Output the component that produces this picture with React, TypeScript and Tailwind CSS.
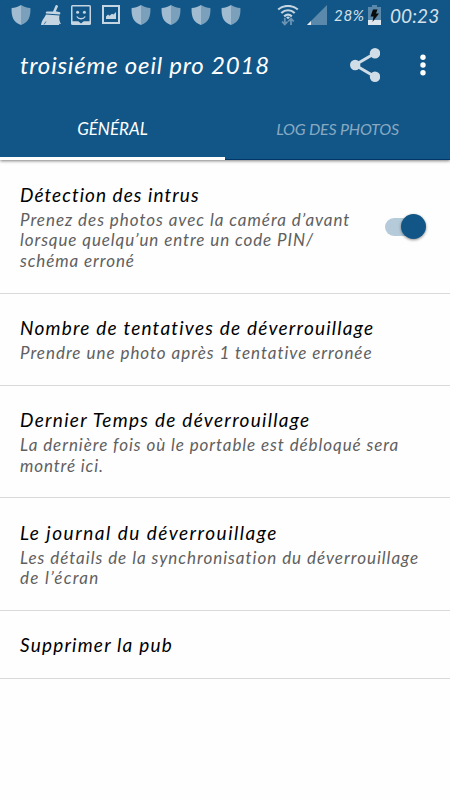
import React from 'react'
import { clsx } from 'clsx'

interface Line {
  text: string
  tracking: string
}

interface Preference {
  title: Line
  summary: Line[]
  height: string
  checked?: boolean
}

const PREFERENCES: Preference[] = [
  {
    title: { text: 'Détection des intrus', tracking: 'tracking-[1.05px]' },
    summary: [
      { text: 'Prenez des photos avec la caméra d’avant', tracking: 'tracking-[0.96px]' },
      { text: 'lorsque quelqu’un entre un code PIN/', tracking: 'tracking-[0.91px]' },
      { text: 'schéma erroné', tracking: 'tracking-[0.9px]' },
    ],
    height: 'h-[134px]',
    checked: true,
  },
  {
    title: { text: 'Nombre de tentatives de déverrouillage', tracking: 'tracking-[1.22px]' },
    summary: [{ text: 'Prendre une photo après 1 tentative erronée', tracking: 'tracking-[0.97px]' }],
    height: 'h-[92px]',
  },
  {
    title: { text: 'Dernier Temps de déverrouillage', tracking: 'tracking-[1.28px]' },
    summary: [
      { text: 'La dernière fois où le portable est débloqué sera', tracking: 'tracking-[0.92px]' },
      { text: 'montré ici.', tracking: 'tracking-[0.87px]' },
    ],
    height: 'h-[112px]',
  },
  {
    title: { text: 'Le journal du déverrouillage', tracking: 'tracking-[1.5px]' },
    summary: [
      { text: 'Les détails de la synchronisation du déverrouillage', tracking: 'tracking-[0.97px]' },
      { text: 'de l’écran', tracking: 'tracking-[1.3px]' },
    ],
    height: 'h-[113px]',
  },
  {
    title: { text: 'Supprimer la pub', tracking: 'tracking-[1.2px]' },
    summary: [],
    height: 'h-[68px]',
  },
]

function ShieldIcon() {
  return (
    <svg className="w-5 h-5 shrink-0" viewBox="0 0 20 20">
      <path d="M10 0C8 1.6 4 2.8.6 3C.3 11 1.800 17 10 20Z" fill="#a1bbd0" />
      <path d="M10 0c2 1.600 6 2.800 9.400 3C19.700 11 18.200 17 10 20Z" fill="#7ba0bc" />
    </svg>
  )
}

function BroomIcon() {
  return (
    <svg className="w-5 h-5 shrink-0" viewBox="0 0 20 20" fill="#c5d5e2">
      <path d="M14.700.2q1.800-.4 2.300 1.200l-2.200 4.800 4.200 1q.8 1.400-.2 2.300L5 8.600q-.6-1.500.7-2.200l6.300.2Z" />
      <path d="M5 9.600l13.500 1c-.8 3 .1 6.400 1.500 8.400l-2-.3.2 1.300H0c.4-4 2.700-6 5-10.400Z" />
      <path d="M3 19.500 5 16.500" stroke="#125687" strokeWidth=".7" />
    </svg>
  )
}

function FaceIcon() {
  return (
    <svg className="w-5 h-5 shrink-0" viewBox="0 0 20 20">
      <path d="M1.500 0h17Q20 0 20 1.500v17q0 1.500-1.500 1.500h-17Q0 20 0 18.500v-17Q0 0 1.500 0Z" fill="#c5d5e2" />
      <path d="M1.500 1.500h17v14.800h-5.800L10 18.500l-2.700-2.200H1.500Z" fill="#125687" />
      <circle cx="6.600" cy="7.300" r="1.500" fill="#c5d5e2" />
      <circle cx="13.400" cy="7.300" r="1.500" fill="#c5d5e2" />
      <path d="M5.800 11.500c1.800 3 6.600 3 8.400 0" fill="none" stroke="#c5d5e2" strokeWidth="1.400" />
    </svg>
  )
}

function PictureIcon() {
  return (
    <svg className="w-[18px] h-5 shrink-0" viewBox="0 0 18 20">
      <path d="M1 1h16v17H1Z" fill="none" stroke="#c5d5e2" strokeWidth="2" />
      <path d="M4 14v-2.500l2-2 1.500 1.200 2.500-2 1.500.8L14 7v7Z" fill="#c5d5e2" />
    </svg>
  )
}

function WifiIcon() {
  return (
    <svg className="w-[22px] h-[22px] shrink-0" viewBox="0 0 22 22" fill="none">
      <path d="M1.200 4.500c5.500-4.700 14-4.700 19.600 0M4.300 8c4-3.700 9.400-3.700 13.400 0M7.200 11.300c2.400-2.100 5.200-2.100 7.600 0" stroke="#c5d5e2" strokeWidth="2.200" />
      <path d="m11 14.300-2-2c1.300-1 2.700-1 4 0Z" fill="#c5d5e2" />
      <path d="M7.800 13v6M5 16.500l2.800 3 2.800-3M14 20v-6M11.200 16.500l2.800-3 2.800 3" stroke="#6b94b4" strokeWidth="1.800" />
    </svg>
  )
}

function SignalIcon() {
  return (
    <svg className="w-5 h-5 shrink-0" viewBox="0 0 20 20">
      <path d="M20 0v20H0Z" fill="#5b89ab" />
      <path d="M4 16v4H0Z" fill="#e4ebf1" />
    </svg>
  )
}

function BatteryIcon() {
  return (
    <svg className="w-[13px] h-5 shrink-0" viewBox="0 0 13 20">
      <path d="M4 0h5v2h4v18H0V2h4Z" fill="#5b89ab" />
      <path d="M0 15h13v5H0Z" fill="#dfe7ee" />
      <path d="M5 4.500h4.500L8 8.500h3L4.500 17l1-5.500H2.500Z" fill="#0b0b0b" />
    </svg>
  )
}

function StatusBar() {
  return (
    <div className="h-[31px] flex items-start pt-[5px] pl-[11px] pr-[10px] text-[#d5e0e9]">
      <div className="flex gap-2.5">
        <ShieldIcon />
        <BroomIcon />
        <FaceIcon />
        <div className="w-5 flex justify-center">
          <PictureIcon />
        </div>
        <ShieldIcon />
        <ShieldIcon />
        <ShieldIcon />
        <ShieldIcon />
      </div>
      <div className="ml-auto flex items-start">
        <WifiIcon />
        <div className="ml-2">
          <SignalIcon />
        </div>
        <span className="w-[34px] text-[15px] leading-5 ml-[7px] tracking-[0.7px] whitespace-nowrap">28%</span>
        <BatteryIcon />
        <span className="w-[50px] ml-[9px] text-[19px] leading-[21px] tracking-[0.1px] whitespace-nowrap">00:23</span>
      </div>
    </div>
  )
}

function AppBar() {
  return (
    <div className="h-[69px] flex items-center pb-px pl-5 pr-[24.5px] text-white">
      <h1 className="text-[24px] leading-8 tracking-[0.8px] whitespace-nowrap">troisiéme oeil pro 2018</h1>
      <svg className="ml-auto w-[30px] h-[34px]" viewBox="0 0 30 34" fill="#d0dde7">
        <path d="M25 5.200 5 17l20 11.700" fill="none" stroke="#d0dde7" strokeWidth="3" />
        <circle cx="25" cy="5.200" r="5.200" />
        <circle cx="5.200" cy="17" r="5.200" />
        <circle cx="25" cy="28.700" r="5.200" />
      </svg>
      <svg className="ml-[39.5px] w-[6px] h-[22px]" viewBox="0 0 6 22" fill="white">
        <circle cx="3" cy="3.300" r="2.700" />
        <circle cx="3" cy="11" r="2.700" />
        <circle cx="3" cy="18.700" r="2.700" />
      </svg>
    </div>
  )
}

function Tabs() {
  return (
    <div className="h-[60px] grid grid-cols-2 leading-6 whitespace-nowrap text-center">
      <div className="border-b-[3px] border-white pt-[17px] text-[17px] text-white">GÉNÉRAL</div>
      <div className="border-b border-[#003567] pt-[17px] text-[16px] tracking-[-0.2px] text-[#87a9c2]">
        LOG DES PHOTOS
      </div>
    </div>
  )
}

function Switch() {
  return (
    <div className="relative w-[41px] h-[26px] shrink-0 flex items-center">
      <div className="w-[34px] h-[18px] rounded-full bg-[#b6cbda]" />
      <div className="absolute right-0 top-0 w-[25px] h-[25px] rounded-full bg-[#125687] shadow-[0_1px_3px_rgba(0,0,0,0.45)]" />
    </div>
  )
}

function PreferenceRow({ title, summary, height, checked }: Preference) {
  return (
    <div className={clsx('flex items-center border-b border-[#d9d9d9] pl-5 pr-6', height)}>
      <div className="flex-1 min-w-0 whitespace-nowrap">
        <h2 className={clsx('text-[19px] leading-[26px] text-black', title.tracking)}>{title.text}</h2>
        {summary.length > 0 && (
          <div className="mt-0.5 text-[17px] leading-[20.5px] text-[#606060]">
            {summary.map((line) => (
              <p key={line.text} className={line.tracking}>
                {line.text}
              </p>
            ))}
          </div>
        )}
      </div>
      {checked && <Switch />}
    </div>
  )
}

export default function App() {
  return (
    <div className="w-[450px] h-[800px] overflow-hidden bg-[#fefefe] italic font-['Lato','Open_Sans',sans-serif]">
      <header className="relative h-40 bg-[#125687] shadow-[0_1px_3px_rgba(0,0,0,0.5)]">
        <StatusBar />
        <AppBar />
        <Tabs />
      </header>
      <main>
        {PREFERENCES.map((pref) => (
          <PreferenceRow key={pref.title.text} {...pref} />
        ))}
      </main>
    </div>
  )
}
